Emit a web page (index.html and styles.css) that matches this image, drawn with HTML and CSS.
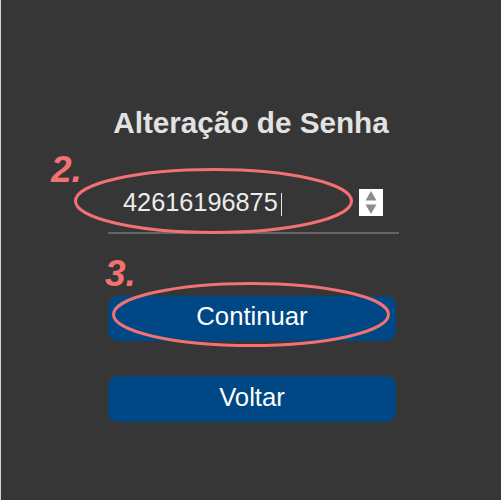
FILE: index.html
```html
<!DOCTYPE html>
<html lang="pt-BR">
<head>
<meta charset="utf-8">
<title>Alteração de Senha</title>
<link rel="stylesheet" href="styles.css">
</head>
<body>
<div class="page">
  <main class="form">
    <h1 class="title">Alteração de Senha</h1>
    <div class="field">
      <span class="value">42616196875<span class="caret"></span></span>
      <span class="spinner">
        <svg width="24" height="27" viewBox="0 0 24 27">
          <rect width="24" height="27" fill="#ffffff"/>
          <path d="M12 2 L17.5 11.5 L6.5 11.5 Z" fill="#8c8c8c"/>
          <path d="M6.5 15.5 L17.5 15.5 L12 25 Z" fill="#8c8c8c"/>
        </svg>
      </span>
    </div>
    <button class="btn btn-continue" type="button">Continuar</button>
    <button class="btn btn-back" type="button">Voltar</button>
  </main>
  <svg class="marks" width="501" height="500" viewBox="0 0 501 500">
    <ellipse cx="213.5" cy="201" rx="138" ry="31.5" fill="none" stroke="#f27171" stroke-width="3"/>
    <ellipse cx="251" cy="314.5" rx="137.5" ry="31" fill="none" stroke="#f27171" stroke-width="3"/>
    <text x="51" y="182" class="mark-label">2.</text>
    <text x="105" y="286" class="mark-label">3.</text>
  </svg>
</div>
</body>
</html>
```
FILE: styles.css
```css
html, body {
  margin: 0;
  padding: 0;
  background: #363636;
}

.page {
  position: relative;
  width: 500px;
  height: 500px;
  border-left: 1px solid #d2d2d2;
  background: #363636;
  font-family: "Liberation Sans", Arial, sans-serif;
  overflow: hidden;
}

.form {
  display: flex;
  flex-direction: column;
  align-items: flex-start;
  width: 291px;
  margin-left: 107px;
  padding-top: 106px;
}

.title {
  margin: 0;
  width: 286px;
  text-align: center;
  font-size: 29.7px;
  line-height: 34px;
  font-weight: bold;
  color: #e2e2e2;
}

.field {
  display: flex;
  align-items: center;
  justify-content: space-between;
  box-sizing: border-box;
  width: 291px;
  margin-top: 47px;
  padding: 0 15px 15px 15px;
  border-bottom: 2px solid #646464;
}

.value {
  display: flex;
  align-items: center;
  font-size: 25.3px;
  line-height: 30px;
  color: #ececec;
}

.caret {
  display: inline-block;
  width: 1px;
  height: 23px;
  margin-left: 3px;
  margin-top: 4px;
  background: #e6e6e6;
}

.spinner {
  display: flex;
  margin-right: 1px;
}

.btn {
  display: block;
  width: 288px;
  height: 45px;
  padding: 0 0 4px 0;
  border: none;
  border-radius: 10px;
  background: #004785;
  color: #ffffff;
  font-family: "Liberation Sans", Arial, sans-serif;
  font-size: 25.7px;
  line-height: 41px;
  text-align: center;
}

.btn-continue {
  margin-top: 62px;
}

.btn-back {
  margin-top: 35px;
  height: 46px;
}

.marks {
  position: absolute;
  left: -1px;
  top: 0;
  pointer-events: none;
}

.mark-label {
  font-family: "Liberation Sans", Arial, sans-serif;
  font-size: 37px;
  font-weight: bold;
  font-style: italic;
  fill: #f27171;
}
```
